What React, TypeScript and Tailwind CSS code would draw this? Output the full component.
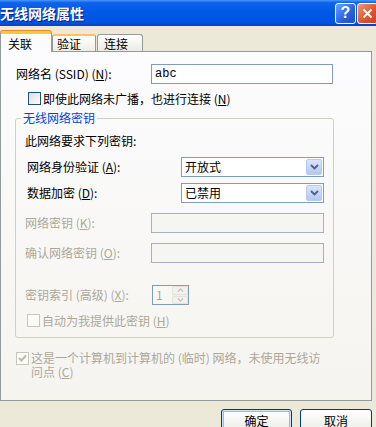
import React from "react";

function Chevron() {
  return (
    <svg width="9" height="6" viewBox="0 0 9 6">
      <path d="M1 1 L4.5 4.5 L8 1" stroke="#4D6185" strokeWidth="1.8" fill="none" />
    </svg>
  );
}

function Select({ text }: { text: string }) {
  return (
    <div className="w-[143px] h-[20px] border border-[#7F9DB9] bg-white flex items-center justify-between">
      <span className="pl-[3px] text-[12px] leading-[14px] text-black">{text}</span>
      <div className="w-[16px] h-[16px] mr-[1px] rounded-[2px] border border-[#B9CAF2] bg-[linear-gradient(180deg,#DAE5FD,#B4C8F5)] flex items-center justify-center">
        <Chevron />
      </div>
    </div>
  );
}

function DisabledInput() {
  return <div className="w-[173px] h-[20px] border border-[#A3B1C2] bg-[#F5F5F1]" />;
}

function Check({ enabled, checked }: { enabled?: boolean; checked?: boolean }) {
  return (
    <div
      className={
        enabled
          ? "w-[13px] h-[13px] shrink-0 border border-[#1C5180] bg-[linear-gradient(135deg,#DCDCD7,#FFFFFF)]"
          : "w-[13px] h-[13px] shrink-0 border border-[#C9C7BA] bg-[#FBFBF8] flex items-center justify-center"
      }
    >
      {checked && (
        <svg width="9" height="9" viewBox="0 0 9 9">
          <path d="M1 4 L3.5 6.5 L8 1.5" stroke="#BDBAAC" strokeWidth="2" fill="none" />
        </svg>
      )}
    </div>
  );
}

function U({ c }: { c: string }) {
  return <span className="underline">{c}</span>;
}

export default function App() {
  return (
    <div className="w-[376px] h-[427px] overflow-hidden bg-[#ECE9D8] flex flex-col font-['Noto_Sans_CJK_SC','Liberation_Sans',sans-serif] text-[12px] leading-[14px] text-black">
      {/* Title bar */}
      <div className="h-[26px] shrink-0 flex items-center justify-between bg-[linear-gradient(180deg,#4A98FA_0%,#0F64EC_10%,#0058E6_45%,#0054E2_85%,#0043CC_100%)]">
        <span className="text-white font-bold text-[14px] leading-[16px] [text-shadow:1px_1px_0_#0A1E8C]">无线网络属性</span>
        <div className="flex items-center gap-[1px] mr-[-2px]">
          <div className="w-[21px] h-[21px] rounded-[3px] border border-white bg-[linear-gradient(135deg,#6FA0FA,#2560E0_60%,#1C4FCC)] flex items-center justify-center text-white font-bold text-[16px] leading-[16px] font-['Liberation_Sans',sans-serif]">
            ?
          </div>
          <div className="w-[21px] h-[21px] rounded-[3px] border border-white bg-[linear-gradient(135deg,#F09A7A,#E0552A_55%,#C8431C)] flex items-center justify-center">
            <svg width="11" height="11" viewBox="0 0 11 11">
              <path d="M1.5 1.5 L9.5 9.5 M9.5 1.5 L1.5 9.5" stroke="white" strokeWidth="2" />
            </svg>
          </div>
        </div>
      </div>

      {/* Tabs */}
      <div className="mt-[5px] h-[20px] shrink-0 flex items-end relative z-10">
        <div className="w-[52px] h-[21px] mb-[-1px] rounded-t-[3px] border-x border-[#919B9C] border-t-[3px] border-t-[#FFC73C] shadow-[0_-1px_0_#E68B2C] bg-[#FCFCFE] pl-[7px] pt-[3px]">
          关联
        </div>
        <div className="w-[44px] h-[17px] rounded-t-[3px] border-x border-[#919B9C] border-t-2 border-t-[#F8C560] bg-[linear-gradient(180deg,#FFFFFF,#EEEDE5)] pl-[4px] pt-[1px]">
          验证
        </div>
        <div className="ml-[1px] w-[46px] h-[17px] rounded-t-[3px] border border-b-0 border-[#919B9C] bg-[linear-gradient(180deg,#FFFFFF,#ECEBE4)] pl-[6px] pt-[2px]">
          连接
        </div>
      </div>

      {/* Panel */}
      <div className="w-[372px] h-[350px] shrink-0 border border-[#919B9C] bg-[linear-gradient(180deg,#FCFCFE,#F5F4EF)] pt-[12px] flex flex-col">
        <div className="h-[20px] flex items-center">
          <span className="ml-[15px] w-[135px]">
            网络名 (SSID) (<U c="N" />):
          </span>
          <div className="w-[182px] h-[20px] border border-[#7F9DB9] bg-white flex items-center pl-[3px] font-['Liberation_Mono',monospace] text-[12px]">
            abc
          </div>
        </div>

        <div className="mt-[8px] h-[13px] flex items-center ml-[27px]">
          <Check enabled />
          <span className="ml-[2px] whitespace-nowrap">
            即使此网络未广播，也进行连接 (<U c="N" />)
          </span>
        </div>

        <fieldset className="mt-[6px] ml-[14px] w-[319px] border border-[#D0D0BF] rounded-[3px] pb-[10px]">
          <legend className="ml-[5px] px-[2px] text-[#0046D5] leading-[14px]">无线网络密钥</legend>
          <div className="pl-[9px] flex flex-col">
            <div className="mt-[9px] h-[14px]">此网络要求下列密钥:</div>

            <div className="mt-[9px] h-[20px] flex items-center">
              <span className="w-[156px] pl-[2px]">
                网络身份验证 (<U c="A" />):
              </span>
              <Select text="开放式" />
            </div>

            <div className="mt-[6px] h-[20px] flex items-center">
              <span className="w-[156px] pl-[2px]">
                数据加密 (<U c="D" />):
              </span>
              <Select text="已禁用" />
            </div>

            <div className="mt-[10px] h-[20px] flex items-center text-[#ACA899]">
              <span className="w-[126px]">
                网络密钥 (<U c="K" />):
              </span>
              <DisabledInput />
            </div>

            <div className="mt-[10px] h-[20px] flex items-center text-[#ACA899]">
              <span className="w-[126px]">
                确认网络密钥 (<U c="O" />):
              </span>
              <DisabledInput />
            </div>

            <div className="mt-[22px] h-[20px] flex items-center text-[#ACA899]">
              <span className="w-[127px]">
                密钥索引 (高级) (<U c="X" />):
              </span>
              <div className="w-[37px] h-[20px] border border-[#7F9DB9] bg-[#F7F7F4] flex items-center justify-between">
                <span className="pl-[3px]">1</span>
                <div className="w-[16px] h-[18px] flex flex-col gap-[1px] bg-[#F0EFE9]">
                  <div className="flex-1 flex items-center justify-center border border-[#E4E3DC] rounded-[2px] bg-[#F2F1EC]">
                    <svg width="7" height="4" viewBox="0 0 7 4">
                      <path d="M1 3.5 L3.5 1 L6 3.5" stroke="#C9C7BA" strokeWidth="1.4" fill="none" />
                    </svg>
                  </div>
                  <div className="flex-1 flex items-center justify-center border border-[#E4E3DC] rounded-[2px] bg-[#F2F1EC]">
                    <svg width="7" height="4" viewBox="0 0 7 4">
                      <path d="M1 0.5 L3.5 3 L6 0.5" stroke="#C9C7BA" strokeWidth="1.4" fill="none" />
                    </svg>
                  </div>
                </div>
              </div>
            </div>

            <div className="mt-[9px] h-[13px] flex items-center text-[#ACA899] ml-[2px]">
              <Check />
              <span className="ml-[2px]">
                自动为我提供此密钥 (<U c="H" />)
              </span>
            </div>
          </div>
        </fieldset>

        <div className="mt-[14px] ml-[15px] flex items-start text-[#ACA899]">
          <Check checked />
          <div className="ml-[2px] mt-[-1px] flex flex-col whitespace-nowrap">
            <div className="h-[14px] leading-[14px]">这是一个计算机到计算机的 (临时) 网络，未使用无线访</div>
            <div className="h-[14px] leading-[14px]">
              问点 (<U c="C" />)
            </div>
          </div>
        </div>
      </div>

      {/* Buttons */}
      <div className="mt-[8px] flex justify-end gap-[8px] pr-[4px]">
        <div className="w-[71px] h-[23px] rounded-[3px] border border-[#003C74] bg-[linear-gradient(180deg,#FFFFFF,#F0F0EA_80%,#D6D0C5)] shadow-[inset_0_0_0_1px_#CEE7FF,inset_0_0_0_2px_#98B8EA] flex items-center justify-center">
          确定
        </div>
        <div className="w-[72px] h-[23px] rounded-[3px] border border-[#003C74] bg-[linear-gradient(180deg,#FFFFFF,#F0F0EA_80%,#D6D0C5)] flex items-center justify-center">
          取消
        </div>
      </div>
    </div>
  );
}
